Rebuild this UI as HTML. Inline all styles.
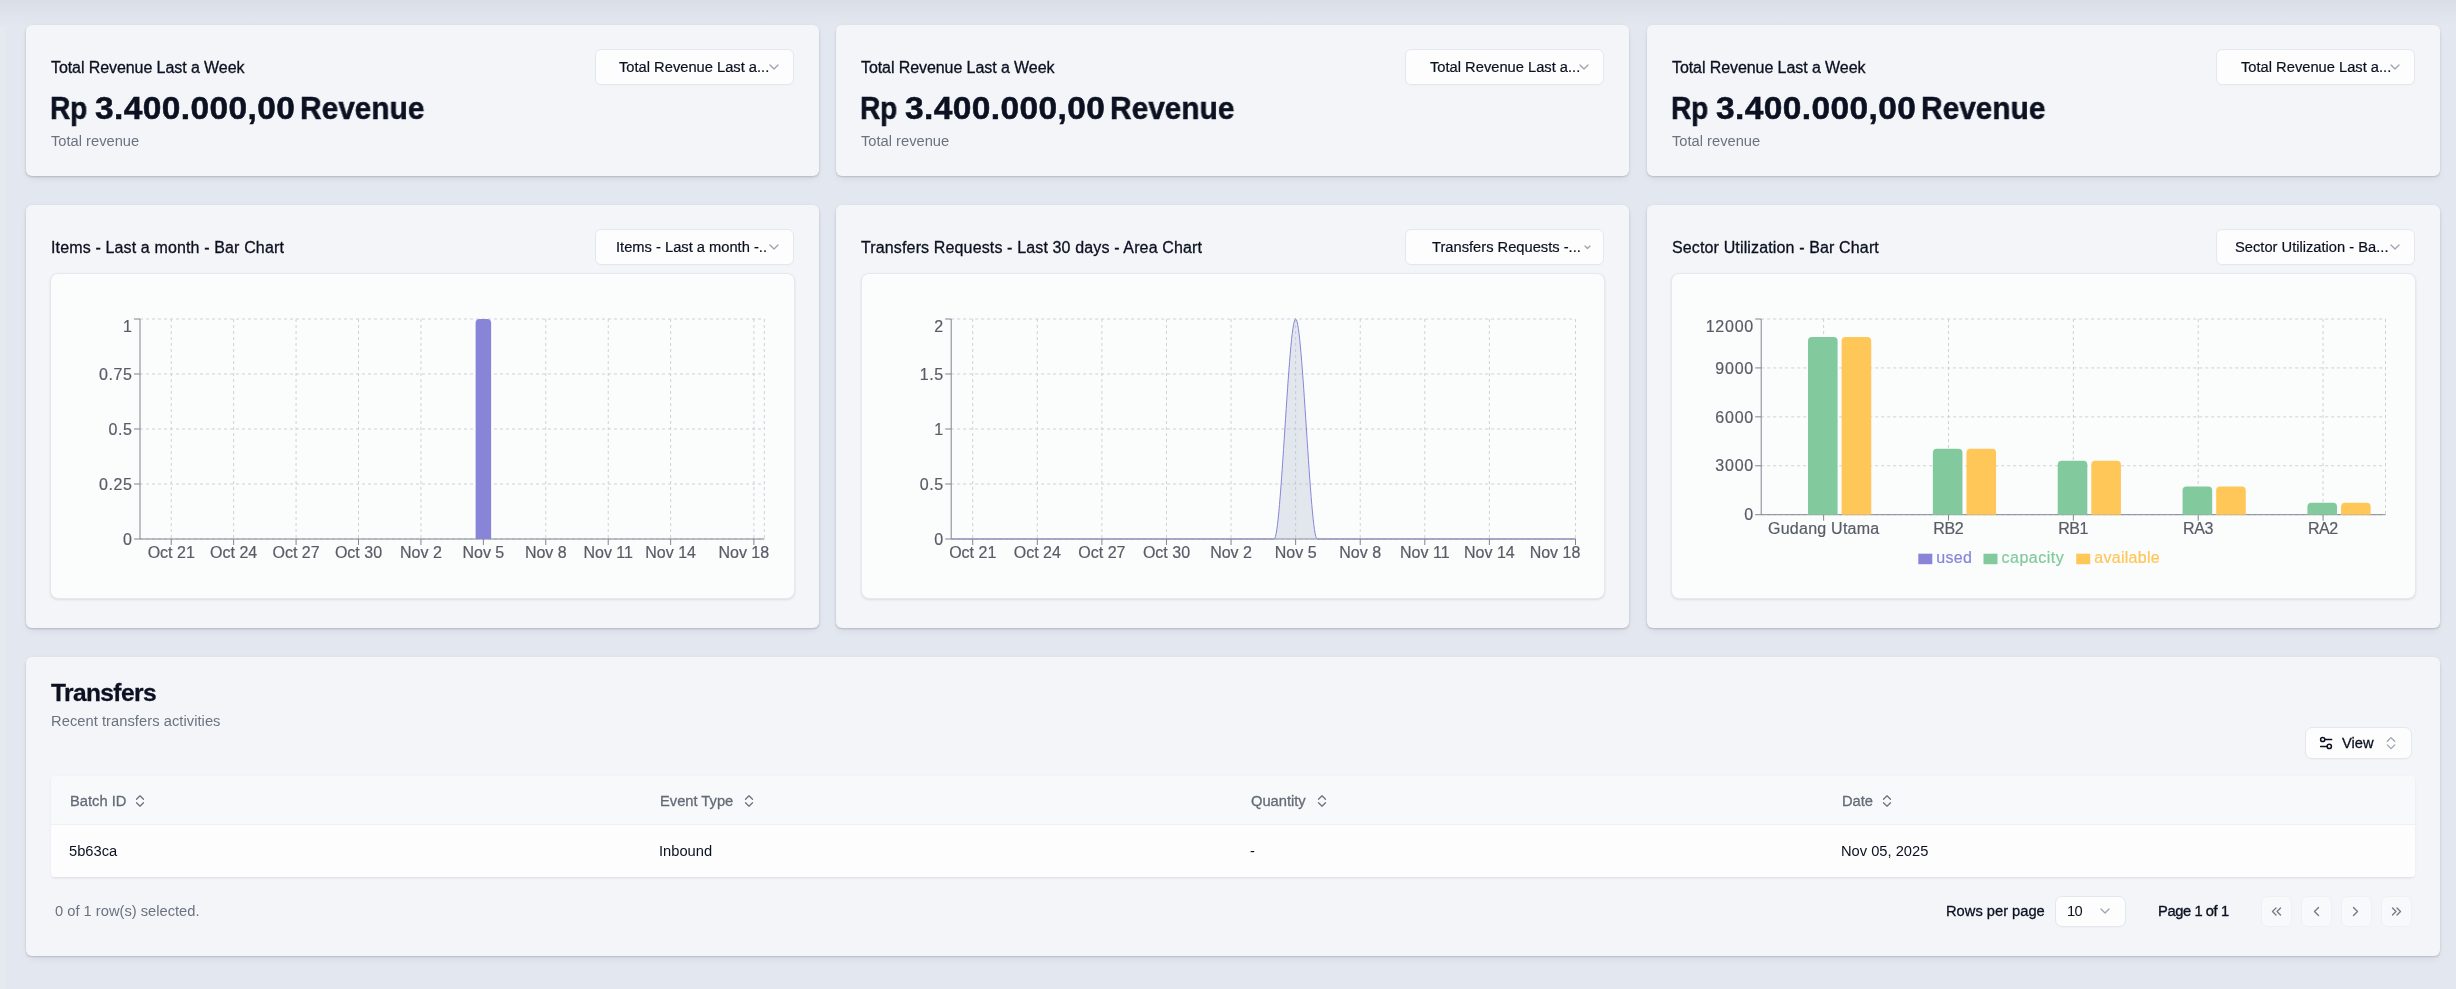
<!DOCTYPE html>
<html><head><meta charset="utf-8"><title>Dashboard</title><style>
*{margin:0;padding:0;box-sizing:border-box}
html,body{width:2456px;height:989px;overflow:hidden}
body{position:relative;background:#e3e7ef;font-family:"Liberation Sans", sans-serif}
.lstrip{position:absolute;left:0;top:0;width:5px;height:989px;background:#e6e9f0}
.topfade{position:absolute;left:0;top:0;width:2456px;height:26px;background:linear-gradient(#dadee6,#e3e7ef)}
.t{position:absolute;white-space:nowrap;line-height:1;will-change:transform}
.card{position:absolute;background:#f4f5f9;border-radius:6px;box-shadow:0 1.5px 2px -0.5px rgba(0,0,0,.15),0 4px 8px -2px rgba(0,0,0,.07),0 0 4px rgba(0,0,0,.04)}
.btn{position:absolute;background:#fdfdfe;border:1px solid #e3e8ef;border-radius:6px;box-shadow:0 1px 1px rgba(0,0,0,.02)}
.chartbox{position:absolute;background:#fbfcfc;border:1px solid #e4e8ef;border-radius:8px;box-shadow:0 1px 3px rgba(0,0,0,.08),0 1px 2px -1px rgba(0,0,0,.08)}
.charts{position:absolute;left:0;top:0;will-change:transform}
.ax{font-family:"Liberation Sans", sans-serif;font-size:16px;fill:#575c66;stroke:#575c66;stroke-width:0.2px}
.ic{position:absolute;overflow:visible}
.tbl{position:absolute;border-radius:4px;overflow:hidden;box-shadow:0 1px 3px rgba(0,0,0,.06),0 2px 2px -1px rgba(0,0,0,.05)}
.thead{position:absolute;left:0;top:0;width:100%;height:49px;background:#f8f9fb;border-bottom:1px solid #eef0f4}
.tbody{position:absolute;left:0;top:49px;width:100%;height:52px;background:#fdfdfe}
.pbtn{position:absolute;width:30.5px;height:31px;background:#f8f9fa;border:1px solid #eef0f3;border-radius:7px}
</style></head>
<body><div class="lstrip"></div><div class="topfade"></div>
<div class="card" style="left:26px;top:25px;width:793px;height:150.6px"></div><div class="t" style="left:50.8px;top:59.56px;font-size:16px;color:#0b1120;font-weight:400;letter-spacing:-0.08px;-webkit-text-stroke:0.3px currentColor;">Total Revenue Last a Week</div><div class="t" style="left:50.0px;top:92.66px;font-size:31px;color:#0b1120;font-weight:700;letter-spacing:-0.4px;transform:scaleX(0.91);transform-origin:0 0;-webkit-text-stroke:0.5px currentColor;">Rp</div><div class="t" style="left:94.5px;top:92.66px;font-size:31px;color:#0b1120;font-weight:700;letter-spacing:0.37px;transform:scaleX(1.08);transform-origin:0 0;-webkit-text-stroke:0.5px currentColor;">3.400.000,00</div><div class="t" style="left:299.9px;top:92.66px;font-size:31px;color:#0b1120;font-weight:700;letter-spacing:0px;transform:scaleX(0.963);transform-origin:0 0;-webkit-text-stroke:0.5px currentColor;">Revenue</div><div class="t" style="left:50.8px;top:133.96px;font-size:14.7px;color:#6b7280;font-weight:400;letter-spacing:0px;">Total revenue</div><div class="btn" style="left:595px;top:49px;width:199px;height:36px"></div><div class="t" style="left:619.0px;top:60.26px;font-size:14.7px;color:#0b1120;font-weight:400;letter-spacing:0px;-webkit-text-stroke:0.2px currentColor;">Total Revenue Last a...</div><svg class="ic" style="left:768.0px;top:63.2px" width="12" height="8.0"><polyline points="2,2 6.0,6.0 10,2" fill="none" stroke="#9ca3af" stroke-width="1.3" stroke-linecap="round" stroke-linejoin="round"/></svg><div class="card" style="left:836px;top:25px;width:793px;height:150.6px"></div><div class="t" style="left:860.8px;top:59.56px;font-size:16px;color:#0b1120;font-weight:400;letter-spacing:-0.08px;-webkit-text-stroke:0.3px currentColor;">Total Revenue Last a Week</div><div class="t" style="left:860.0px;top:92.66px;font-size:31px;color:#0b1120;font-weight:700;letter-spacing:-0.4px;transform:scaleX(0.91);transform-origin:0 0;-webkit-text-stroke:0.5px currentColor;">Rp</div><div class="t" style="left:904.5px;top:92.66px;font-size:31px;color:#0b1120;font-weight:700;letter-spacing:0.37px;transform:scaleX(1.08);transform-origin:0 0;-webkit-text-stroke:0.5px currentColor;">3.400.000,00</div><div class="t" style="left:1109.9px;top:92.66px;font-size:31px;color:#0b1120;font-weight:700;letter-spacing:0px;transform:scaleX(0.963);transform-origin:0 0;-webkit-text-stroke:0.5px currentColor;">Revenue</div><div class="t" style="left:860.8px;top:133.96px;font-size:14.7px;color:#6b7280;font-weight:400;letter-spacing:0px;">Total revenue</div><div class="btn" style="left:1405px;top:49px;width:199px;height:36px"></div><div class="t" style="left:1430.0px;top:60.26px;font-size:14.7px;color:#0b1120;font-weight:400;letter-spacing:0px;-webkit-text-stroke:0.2px currentColor;">Total Revenue Last a...</div><svg class="ic" style="left:1578.0px;top:63.2px" width="12" height="8.0"><polyline points="2,2 6.0,6.0 10,2" fill="none" stroke="#9ca3af" stroke-width="1.3" stroke-linecap="round" stroke-linejoin="round"/></svg><div class="card" style="left:1647px;top:25px;width:793px;height:150.6px"></div><div class="t" style="left:1671.8px;top:59.56px;font-size:16px;color:#0b1120;font-weight:400;letter-spacing:-0.08px;-webkit-text-stroke:0.3px currentColor;">Total Revenue Last a Week</div><div class="t" style="left:1671.0px;top:92.66px;font-size:31px;color:#0b1120;font-weight:700;letter-spacing:-0.4px;transform:scaleX(0.91);transform-origin:0 0;-webkit-text-stroke:0.5px currentColor;">Rp</div><div class="t" style="left:1715.5px;top:92.66px;font-size:31px;color:#0b1120;font-weight:700;letter-spacing:0.37px;transform:scaleX(1.08);transform-origin:0 0;-webkit-text-stroke:0.5px currentColor;">3.400.000,00</div><div class="t" style="left:1920.9px;top:92.66px;font-size:31px;color:#0b1120;font-weight:700;letter-spacing:0px;transform:scaleX(0.963);transform-origin:0 0;-webkit-text-stroke:0.5px currentColor;">Revenue</div><div class="t" style="left:1671.8px;top:133.96px;font-size:14.7px;color:#6b7280;font-weight:400;letter-spacing:0px;">Total revenue</div><div class="btn" style="left:2216px;top:49px;width:199px;height:36px"></div><div class="t" style="left:2240.5px;top:60.26px;font-size:14.7px;color:#0b1120;font-weight:400;letter-spacing:0px;-webkit-text-stroke:0.2px currentColor;">Total Revenue Last a...</div><svg class="ic" style="left:2389.0px;top:63.2px" width="12" height="8.0"><polyline points="2,2 6.0,6.0 10,2" fill="none" stroke="#9ca3af" stroke-width="1.3" stroke-linecap="round" stroke-linejoin="round"/></svg><div class="card" style="left:26px;top:205px;width:793px;height:422.7px"></div><div class="t" style="left:50.6px;top:240.26px;font-size:16px;color:#0b1120;font-weight:400;letter-spacing:0.14px;-webkit-text-stroke:0.3px currentColor;">Items - Last a month - Bar Chart</div><div class="btn" style="left:595px;top:229px;width:199px;height:36px"></div><div class="t" style="left:615.5px;top:240.36px;font-size:14.7px;color:#0b1120;font-weight:400;letter-spacing:0px;-webkit-text-stroke:0.2px currentColor;">Items - Last a month -..</div><svg class="ic" style="left:768.0px;top:243.2px" width="12" height="8.0"><polyline points="2,2 6.0,6.0 10,2" fill="none" stroke="#9ca3af" stroke-width="1.3" stroke-linecap="round" stroke-linejoin="round"/></svg><div class="chartbox" style="left:50px;top:273px;width:745px;height:326px"></div><div class="card" style="left:836px;top:205px;width:793px;height:422.7px"></div><div class="t" style="left:860.6px;top:240.26px;font-size:16px;color:#0b1120;font-weight:400;letter-spacing:0.14px;-webkit-text-stroke:0.3px currentColor;">Transfers Requests - Last 30 days - Area Chart</div><div class="btn" style="left:1405px;top:229px;width:199px;height:36px"></div><div class="t" style="left:1432.2px;top:240.36px;font-size:14.7px;color:#0b1120;font-weight:400;letter-spacing:0px;-webkit-text-stroke:0.2px currentColor;">Transfers Requests -...</div><svg class="ic" style="left:1583.0px;top:243.9px" width="9" height="6.5"><polyline points="2,2 4.5,4.5 7,2" fill="none" stroke="#9ca3af" stroke-width="1.3" stroke-linecap="round" stroke-linejoin="round"/></svg><div class="chartbox" style="left:861px;top:273px;width:744px;height:326px"></div><div class="card" style="left:1647px;top:205px;width:793px;height:422.7px"></div><div class="t" style="left:1671.6px;top:240.26px;font-size:16px;color:#0b1120;font-weight:400;letter-spacing:0.14px;-webkit-text-stroke:0.3px currentColor;">Sector Utilization - Bar Chart</div><div class="btn" style="left:2216px;top:229px;width:199px;height:36px"></div><div class="t" style="left:2235.0px;top:240.36px;font-size:14.7px;color:#0b1120;font-weight:400;letter-spacing:0px;-webkit-text-stroke:0.2px currentColor;">Sector Utilization - Ba...</div><svg class="ic" style="left:2389.0px;top:243.2px" width="12" height="8.0"><polyline points="2,2 6.0,6.0 10,2" fill="none" stroke="#9ca3af" stroke-width="1.3" stroke-linecap="round" stroke-linejoin="round"/></svg><div class="chartbox" style="left:1671px;top:273px;width:745px;height:326px"></div><svg class="charts" width="2456" height="989"><line x1="140.0" y1="539.0" x2="764.3" y2="539.0" stroke="#cdd1d8" stroke-dasharray="3 3"/><line x1="140.0" y1="484.0" x2="764.3" y2="484.0" stroke="#cdd1d8" stroke-dasharray="3 3"/><line x1="140.0" y1="429.0" x2="764.3" y2="429.0" stroke="#cdd1d8" stroke-dasharray="3 3"/><line x1="140.0" y1="374.0" x2="764.3" y2="374.0" stroke="#cdd1d8" stroke-dasharray="3 3"/><line x1="140.0" y1="319.0" x2="764.3" y2="319.0" stroke="#cdd1d8" stroke-dasharray="3 3"/><line x1="171.22" y1="319.0" x2="171.22" y2="539.0" stroke="#cdd1d8" stroke-dasharray="3 3"/><line x1="233.64" y1="319.0" x2="233.64" y2="539.0" stroke="#cdd1d8" stroke-dasharray="3 3"/><line x1="296.07" y1="319.0" x2="296.07" y2="539.0" stroke="#cdd1d8" stroke-dasharray="3 3"/><line x1="358.5" y1="319.0" x2="358.5" y2="539.0" stroke="#cdd1d8" stroke-dasharray="3 3"/><line x1="420.94" y1="319.0" x2="420.94" y2="539.0" stroke="#cdd1d8" stroke-dasharray="3 3"/><line x1="483.36" y1="319.0" x2="483.36" y2="539.0" stroke="#cdd1d8" stroke-dasharray="3 3"/><line x1="545.79" y1="319.0" x2="545.79" y2="539.0" stroke="#cdd1d8" stroke-dasharray="3 3"/><line x1="608.22" y1="319.0" x2="608.22" y2="539.0" stroke="#cdd1d8" stroke-dasharray="3 3"/><line x1="670.65" y1="319.0" x2="670.65" y2="539.0" stroke="#cdd1d8" stroke-dasharray="3 3"/><line x1="753.89" y1="319.0" x2="753.89" y2="539.0" stroke="#cdd1d8" stroke-dasharray="3 3"/><line x1="764.3" y1="319.0" x2="764.3" y2="539.0" stroke="#cdd1d8" stroke-dasharray="3 3"/><line x1="140.0" y1="319.0" x2="140.0" y2="539.0" stroke="#80858f"/><line x1="134.0" y1="539.0" x2="140.0" y2="539.0" stroke="#80858f"/><text x="132.6" y="539.0" dy="0.355em" text-anchor="end" class="ax" letter-spacing="0.6">0</text><line x1="134.0" y1="484.0" x2="140.0" y2="484.0" stroke="#80858f"/><text x="132.6" y="484.0" dy="0.355em" text-anchor="end" class="ax" letter-spacing="0.6">0.25</text><line x1="134.0" y1="429.0" x2="140.0" y2="429.0" stroke="#80858f"/><text x="132.6" y="429.0" dy="0.355em" text-anchor="end" class="ax" letter-spacing="0.6">0.5</text><line x1="134.0" y1="374.0" x2="140.0" y2="374.0" stroke="#80858f"/><text x="132.6" y="374.0" dy="0.355em" text-anchor="end" class="ax" letter-spacing="0.6">0.75</text><line x1="134.0" y1="319.0" x2="140.0" y2="319.0" stroke="#80858f"/><text x="132.6" y="326.0" dy="0.355em" text-anchor="end" class="ax" letter-spacing="0.6">1</text><line x1="140.0" y1="539.0" x2="764.3" y2="539.0" stroke="#80858f"/><line x1="171.22" y1="539.0" x2="171.22" y2="545.0" stroke="#80858f"/><text x="171.22" y="547.0" dy="0.71em" text-anchor="middle" class="ax" letter-spacing="0">Oct 21</text><line x1="233.64" y1="539.0" x2="233.64" y2="545.0" stroke="#80858f"/><text x="233.64" y="547.0" dy="0.71em" text-anchor="middle" class="ax" letter-spacing="0">Oct 24</text><line x1="296.07" y1="539.0" x2="296.07" y2="545.0" stroke="#80858f"/><text x="296.07" y="547.0" dy="0.71em" text-anchor="middle" class="ax" letter-spacing="0">Oct 27</text><line x1="358.5" y1="539.0" x2="358.5" y2="545.0" stroke="#80858f"/><text x="358.5" y="547.0" dy="0.71em" text-anchor="middle" class="ax" letter-spacing="0">Oct 30</text><line x1="420.94" y1="539.0" x2="420.94" y2="545.0" stroke="#80858f"/><text x="420.94" y="547.0" dy="0.71em" text-anchor="middle" class="ax" letter-spacing="0">Nov 2</text><line x1="483.36" y1="539.0" x2="483.36" y2="545.0" stroke="#80858f"/><text x="483.36" y="547.0" dy="0.71em" text-anchor="middle" class="ax" letter-spacing="0">Nov 5</text><line x1="545.79" y1="539.0" x2="545.79" y2="545.0" stroke="#80858f"/><text x="545.79" y="547.0" dy="0.71em" text-anchor="middle" class="ax" letter-spacing="0">Nov 8</text><line x1="608.22" y1="539.0" x2="608.22" y2="545.0" stroke="#80858f"/><text x="608.22" y="547.0" dy="0.71em" text-anchor="middle" class="ax" letter-spacing="0">Nov 11</text><line x1="670.65" y1="539.0" x2="670.65" y2="545.0" stroke="#80858f"/><text x="670.65" y="547.0" dy="0.71em" text-anchor="middle" class="ax" letter-spacing="0">Nov 14</text><line x1="753.89" y1="539.0" x2="753.89" y2="545.0" stroke="#80858f"/><text x="743.8" y="547.0" dy="0.71em" text-anchor="middle" class="ax" letter-spacing="0">Nov 18</text><path d="M475.61,539.0 V323.0 a4,4 0 0 1 4,-4 h7.5 a4,4 0 0 1 4,4 V539.0 Z" fill="#8884d8"/><line x1="951.2" y1="539.0" x2="1575.5" y2="539.0" stroke="#cdd1d8" stroke-dasharray="3 3"/><line x1="951.2" y1="484.0" x2="1575.5" y2="484.0" stroke="#cdd1d8" stroke-dasharray="3 3"/><line x1="951.2" y1="429.0" x2="1575.5" y2="429.0" stroke="#cdd1d8" stroke-dasharray="3 3"/><line x1="951.2" y1="374.0" x2="1575.5" y2="374.0" stroke="#cdd1d8" stroke-dasharray="3 3"/><line x1="951.2" y1="319.0" x2="1575.5" y2="319.0" stroke="#cdd1d8" stroke-dasharray="3 3"/><line x1="972.73" y1="319.0" x2="972.73" y2="539.0" stroke="#cdd1d8" stroke-dasharray="3 3"/><line x1="1037.31" y1="319.0" x2="1037.31" y2="539.0" stroke="#cdd1d8" stroke-dasharray="3 3"/><line x1="1101.89" y1="319.0" x2="1101.89" y2="539.0" stroke="#cdd1d8" stroke-dasharray="3 3"/><line x1="1166.48" y1="319.0" x2="1166.48" y2="539.0" stroke="#cdd1d8" stroke-dasharray="3 3"/><line x1="1231.06" y1="319.0" x2="1231.06" y2="539.0" stroke="#cdd1d8" stroke-dasharray="3 3"/><line x1="1295.64" y1="319.0" x2="1295.64" y2="539.0" stroke="#cdd1d8" stroke-dasharray="3 3"/><line x1="1360.22" y1="319.0" x2="1360.22" y2="539.0" stroke="#cdd1d8" stroke-dasharray="3 3"/><line x1="1424.81" y1="319.0" x2="1424.81" y2="539.0" stroke="#cdd1d8" stroke-dasharray="3 3"/><line x1="1489.39" y1="319.0" x2="1489.39" y2="539.0" stroke="#cdd1d8" stroke-dasharray="3 3"/><line x1="1575.5" y1="319.0" x2="1575.5" y2="539.0" stroke="#cdd1d8" stroke-dasharray="3 3"/><line x1="1575.5" y1="319.0" x2="1575.5" y2="539.0" stroke="#cdd1d8" stroke-dasharray="3 3"/><path d="M1274.11,539.0 C1281.29,539.0 1288.47,319.0 1295.64,319.0 C1302.82,319.0 1309.99,539.0 1317.17,539.0 Z" fill="rgb(180,188,210)" fill-opacity="0.35"/><path d="M951.2,539.0 H1274.11 C1281.29,539.0 1288.47,319.0 1295.64,319.0 C1302.82,319.0 1309.99,539.0 1317.17,539.0 H1575.5" fill="none" stroke="#8884d8"/><line x1="951.2" y1="319.0" x2="951.2" y2="539.0" stroke="#80858f"/><line x1="945.2" y1="539.0" x2="951.2" y2="539.0" stroke="#80858f"/><text x="943.8000000000001" y="539.0" dy="0.355em" text-anchor="end" class="ax" letter-spacing="0.6">0</text><line x1="945.2" y1="484.0" x2="951.2" y2="484.0" stroke="#80858f"/><text x="943.8000000000001" y="484.0" dy="0.355em" text-anchor="end" class="ax" letter-spacing="0.6">0.5</text><line x1="945.2" y1="429.0" x2="951.2" y2="429.0" stroke="#80858f"/><text x="943.8000000000001" y="429.0" dy="0.355em" text-anchor="end" class="ax" letter-spacing="0.6">1</text><line x1="945.2" y1="374.0" x2="951.2" y2="374.0" stroke="#80858f"/><text x="943.8000000000001" y="374.0" dy="0.355em" text-anchor="end" class="ax" letter-spacing="0.6">1.5</text><line x1="945.2" y1="319.0" x2="951.2" y2="319.0" stroke="#80858f"/><text x="943.8000000000001" y="326.0" dy="0.355em" text-anchor="end" class="ax" letter-spacing="0.6">2</text><line x1="951.2" y1="539.0" x2="1575.5" y2="539.0" stroke="#8f91a3"/><line x1="972.73" y1="539.0" x2="972.73" y2="545.0" stroke="#80858f"/><text x="972.73" y="547.0" dy="0.71em" text-anchor="middle" class="ax" letter-spacing="0">Oct 21</text><line x1="1037.31" y1="539.0" x2="1037.31" y2="545.0" stroke="#80858f"/><text x="1037.31" y="547.0" dy="0.71em" text-anchor="middle" class="ax" letter-spacing="0">Oct 24</text><line x1="1101.89" y1="539.0" x2="1101.89" y2="545.0" stroke="#80858f"/><text x="1101.89" y="547.0" dy="0.71em" text-anchor="middle" class="ax" letter-spacing="0">Oct 27</text><line x1="1166.48" y1="539.0" x2="1166.48" y2="545.0" stroke="#80858f"/><text x="1166.48" y="547.0" dy="0.71em" text-anchor="middle" class="ax" letter-spacing="0">Oct 30</text><line x1="1231.06" y1="539.0" x2="1231.06" y2="545.0" stroke="#80858f"/><text x="1231.06" y="547.0" dy="0.71em" text-anchor="middle" class="ax" letter-spacing="0">Nov 2</text><line x1="1295.64" y1="539.0" x2="1295.64" y2="545.0" stroke="#80858f"/><text x="1295.64" y="547.0" dy="0.71em" text-anchor="middle" class="ax" letter-spacing="0">Nov 5</text><line x1="1360.22" y1="539.0" x2="1360.22" y2="545.0" stroke="#80858f"/><text x="1360.22" y="547.0" dy="0.71em" text-anchor="middle" class="ax" letter-spacing="0">Nov 8</text><line x1="1424.81" y1="539.0" x2="1424.81" y2="545.0" stroke="#80858f"/><text x="1424.81" y="547.0" dy="0.71em" text-anchor="middle" class="ax" letter-spacing="0">Nov 11</text><line x1="1489.39" y1="539.0" x2="1489.39" y2="545.0" stroke="#80858f"/><text x="1489.39" y="547.0" dy="0.71em" text-anchor="middle" class="ax" letter-spacing="0">Nov 14</text><line x1="1575.5" y1="539.0" x2="1575.5" y2="545.0" stroke="#80858f"/><text x="1555.0" y="547.0" dy="0.71em" text-anchor="middle" class="ax" letter-spacing="0">Nov 18</text><line x1="1761.2" y1="514.7" x2="2385.5" y2="514.7" stroke="#cdd1d8" stroke-dasharray="3 3"/><line x1="1761.2" y1="465.77500000000003" x2="2385.5" y2="465.77500000000003" stroke="#cdd1d8" stroke-dasharray="3 3"/><line x1="1761.2" y1="416.85" x2="2385.5" y2="416.85" stroke="#cdd1d8" stroke-dasharray="3 3"/><line x1="1761.2" y1="367.925" x2="2385.5" y2="367.925" stroke="#cdd1d8" stroke-dasharray="3 3"/><line x1="1761.2" y1="319.0" x2="2385.5" y2="319.0" stroke="#cdd1d8" stroke-dasharray="3 3"/><line x1="1823.63" y1="319.0" x2="1823.63" y2="514.7" stroke="#cdd1d8" stroke-dasharray="3 3"/><line x1="1948.49" y1="319.0" x2="1948.49" y2="514.7" stroke="#cdd1d8" stroke-dasharray="3 3"/><line x1="2073.35" y1="319.0" x2="2073.35" y2="514.7" stroke="#cdd1d8" stroke-dasharray="3 3"/><line x1="2198.21" y1="319.0" x2="2198.21" y2="514.7" stroke="#cdd1d8" stroke-dasharray="3 3"/><line x1="2323.0699999999997" y1="319.0" x2="2323.0699999999997" y2="514.7" stroke="#cdd1d8" stroke-dasharray="3 3"/><line x1="2385.5" y1="319.0" x2="2385.5" y2="514.7" stroke="#cdd1d8" stroke-dasharray="3 3"/><line x1="1761.2" y1="319.0" x2="1761.2" y2="514.7" stroke="#80858f"/><line x1="1755.2" y1="514.7" x2="1761.2" y2="514.7" stroke="#80858f"/><text x="1753.95" y="514.7" dy="0.355em" text-anchor="end" class="ax" letter-spacing="0.75">0</text><line x1="1755.2" y1="465.77500000000003" x2="1761.2" y2="465.77500000000003" stroke="#80858f"/><text x="1753.95" y="465.77500000000003" dy="0.355em" text-anchor="end" class="ax" letter-spacing="0.75">3000</text><line x1="1755.2" y1="416.85" x2="1761.2" y2="416.85" stroke="#80858f"/><text x="1753.95" y="416.85" dy="0.355em" text-anchor="end" class="ax" letter-spacing="0.75">6000</text><line x1="1755.2" y1="367.925" x2="1761.2" y2="367.925" stroke="#80858f"/><text x="1753.95" y="367.925" dy="0.355em" text-anchor="end" class="ax" letter-spacing="0.75">9000</text><line x1="1755.2" y1="319.0" x2="1761.2" y2="319.0" stroke="#80858f"/><text x="1753.95" y="326.0" dy="0.355em" text-anchor="end" class="ax" letter-spacing="0.75">12000</text><line x1="1761.2" y1="514.7" x2="2385.5" y2="514.7" stroke="#80858f"/><line x1="1823.63" y1="514.7" x2="1823.63" y2="520.7" stroke="#80858f"/><text x="1823.755" y="522.7" dy="0.71em" text-anchor="middle" class="ax" letter-spacing="0.25">Gudang Utama</text><line x1="1948.49" y1="514.7" x2="1948.49" y2="520.7" stroke="#80858f"/><text x="1948.29" y="522.7" dy="0.71em" text-anchor="middle" class="ax" letter-spacing="-0.4">RB2</text><line x1="2073.35" y1="514.7" x2="2073.35" y2="520.7" stroke="#80858f"/><text x="2073.15" y="522.7" dy="0.71em" text-anchor="middle" class="ax" letter-spacing="-0.4">RB1</text><line x1="2198.21" y1="514.7" x2="2198.21" y2="520.7" stroke="#80858f"/><text x="2198.01" y="522.7" dy="0.71em" text-anchor="middle" class="ax" letter-spacing="-0.4">RA3</text><line x1="2323.0699999999997" y1="514.7" x2="2323.0699999999997" y2="520.7" stroke="#80858f"/><text x="2322.87" y="522.7" dy="0.71em" text-anchor="middle" class="ax" letter-spacing="-0.4">RA2</text><path d="M1808.00,514.7 V340.94 a4,4 0 0 1 4,-4 h21.60 a4,4 0 0 1 4,4 V514.7 Z" fill="#82ca9d"/><path d="M1841.60,514.7 V340.94 a4,4 0 0 1 4,-4 h21.60 a4,4 0 0 1 4,4 V514.7 Z" fill="#ffc658"/><path d="M1932.86,514.7 V452.65 a4,4 0 0 1 4,-4 h21.60 a4,4 0 0 1 4,4 V514.7 Z" fill="#82ca9d"/><path d="M1966.46,514.7 V452.65 a4,4 0 0 1 4,-4 h21.60 a4,4 0 0 1 4,4 V514.7 Z" fill="#ffc658"/><path d="M2057.72,514.7 V464.72 a4,4 0 0 1 4,-4 h21.60 a4,4 0 0 1 4,4 V514.7 Z" fill="#82ca9d"/><path d="M2091.32,514.7 V464.72 a4,4 0 0 1 4,-4 h21.60 a4,4 0 0 1 4,4 V514.7 Z" fill="#ffc658"/><path d="M2182.58,514.7 V490.49 a4,4 0 0 1 4,-4 h21.60 a4,4 0 0 1 4,4 V514.7 Z" fill="#82ca9d"/><path d="M2216.18,514.7 V490.49 a4,4 0 0 1 4,-4 h21.60 a4,4 0 0 1 4,4 V514.7 Z" fill="#ffc658"/><path d="M2307.44,514.7 V506.63 a4,4 0 0 1 4,-4 h21.60 a4,4 0 0 1 4,4 V514.7 Z" fill="#82ca9d"/><path d="M2341.04,514.7 V506.63 a4,4 0 0 1 4,-4 h21.60 a4,4 0 0 1 4,4 V514.7 Z" fill="#ffc658"/><rect x="1918.3" y="553.7" width="14" height="10.5" fill="#8884d8"/><text x="1936.3" y="557" dy="0.355em" class="ax" letter-spacing="0.3" style="fill:#8884d8;stroke:#8884d8">used</text><rect x="1983.5" y="553.7" width="14" height="10.5" fill="#82ca9d"/><text x="2001.5" y="557" dy="0.355em" class="ax" letter-spacing="0.5" style="fill:#82ca9d;stroke:#82ca9d">capacity</text><rect x="2076.2" y="553.7" width="14" height="10.5" fill="#ffc658"/><text x="2094.2" y="557" dy="0.355em" class="ax" letter-spacing="0.3" style="fill:#ffc658;stroke:#ffc658">available</text></svg><div class="card" style="left:26px;top:656.8px;width:2414px;height:298.9px"></div><div class="t" style="left:51.0px;top:680.76px;font-size:24.5px;color:#0b1120;font-weight:700;letter-spacing:-0.6px;-webkit-text-stroke:0.3px currentColor;">Transfers</div><div class="t" style="left:50.8px;top:714.36px;font-size:14.7px;color:#6b7280;font-weight:400;letter-spacing:0.05px;">Recent transfers activities</div><div class="btn" style="left:2305px;top:727px;width:107px;height:32px;border-radius:7px"></div><svg class="ic" style="left:2316px;top:734px" width="20" height="18"><g fill="none" stroke="#0b1120" stroke-width="1.5" stroke-linecap="round"><circle cx="6.7" cy="5.5" r="2.1"/><line x1="8.8" y1="5.5" x2="15.6" y2="5.5"/><circle cx="13.3" cy="12.4" r="2.1"/><line x1="4.6" y1="12.4" x2="11.2" y2="12.4"/></g></svg><div class="t" style="left:2342.3px;top:736.16px;font-size:14.7px;color:#0b1120;font-weight:400;letter-spacing:0px;-webkit-text-stroke:0.3px currentColor;">View</div><svg class="ic" style="left:2385px;top:735px" width="12" height="16"><g fill="none" stroke="#9ca3af" stroke-width="1.3" stroke-linecap="round" stroke-linejoin="round"><polyline points="2.3,6.3 6,2.6 9.7,6.3"/><polyline points="2.3,9.9 6,13.6 9.7,9.9"/></g></svg><div class="tbl" style="left:51px;top:776px;width:2364px;height:101px"><div class="thead"></div><div class="tbody"></div></div><div class="t" style="left:70.0px;top:794.06px;font-size:14.7px;color:#646b77;font-weight:400;letter-spacing:0px;-webkit-text-stroke:0.3px currentColor;">Batch ID</div><svg class="ic" style="left:133.5px;top:793px" width="12" height="16"><g fill="none" stroke="#6b7280" stroke-width="1.25" stroke-linecap="round" stroke-linejoin="round"><polyline points="2.5,6.3 6,2.8 9.5,6.3"/><polyline points="2.5,9.7 6,13.2 9.5,9.7"/></g></svg><div class="t" style="left:659.9px;top:794.06px;font-size:14.7px;color:#646b77;font-weight:400;letter-spacing:0px;-webkit-text-stroke:0.3px currentColor;">Event Type</div><svg class="ic" style="left:743px;top:793px" width="12" height="16"><g fill="none" stroke="#6b7280" stroke-width="1.25" stroke-linecap="round" stroke-linejoin="round"><polyline points="2.5,6.3 6,2.8 9.5,6.3"/><polyline points="2.5,9.7 6,13.2 9.5,9.7"/></g></svg><div class="t" style="left:1250.7px;top:794.06px;font-size:14.7px;color:#646b77;font-weight:400;letter-spacing:0px;-webkit-text-stroke:0.3px currentColor;">Quantity</div><svg class="ic" style="left:1316px;top:793px" width="12" height="16"><g fill="none" stroke="#6b7280" stroke-width="1.25" stroke-linecap="round" stroke-linejoin="round"><polyline points="2.5,6.3 6,2.8 9.5,6.3"/><polyline points="2.5,9.7 6,13.2 9.5,9.7"/></g></svg><div class="t" style="left:1841.6px;top:794.06px;font-size:14.7px;color:#646b77;font-weight:400;letter-spacing:0px;-webkit-text-stroke:0.3px currentColor;">Date</div><svg class="ic" style="left:1881px;top:793px" width="12" height="16"><g fill="none" stroke="#6b7280" stroke-width="1.25" stroke-linecap="round" stroke-linejoin="round"><polyline points="2.5,6.3 6,2.8 9.5,6.3"/><polyline points="2.5,9.7 6,13.2 9.5,9.7"/></g></svg><div class="t" style="left:68.5px;top:844.16px;font-size:14.7px;color:#0b1120;font-weight:400;letter-spacing:0px;">5b63ca</div><div class="t" style="left:658.8px;top:844.16px;font-size:14.7px;color:#0b1120;font-weight:400;letter-spacing:0px;">Inbound</div><div class="t" style="left:1249.9px;top:844.16px;font-size:14.7px;color:#0b1120;font-weight:400;letter-spacing:0px;">-</div><div class="t" style="left:1840.5px;top:844.16px;font-size:14.7px;color:#0b1120;font-weight:400;letter-spacing:0px;">Nov 05, 2025</div><div class="t" style="left:54.7px;top:903.56px;font-size:14.7px;color:#6b7280;font-weight:400;letter-spacing:0px;">0 of 1 row(s) selected.</div><div class="t" style="left:1946.4px;top:903.96px;font-size:14.7px;color:#0b1120;font-weight:400;letter-spacing:0px;-webkit-text-stroke:0.3px currentColor;">Rows per page</div><div class="btn" style="left:2055px;top:895.5px;width:71px;height:31px;border-radius:7px"></div><div class="t" style="left:2066.5px;top:904.16px;font-size:14.7px;color:#0b1120;font-weight:400;letter-spacing:-0.6px;">10</div><svg class="ic" style="left:2099.0px;top:907.0px" width="12" height="8.0"><polyline points="2,2 6.0,6.0 10,2" fill="none" stroke="#9ca3af" stroke-width="1.3" stroke-linecap="round" stroke-linejoin="round"/></svg><div class="t" style="left:2158.1px;top:903.96px;font-size:14.7px;color:#0b1120;font-weight:400;letter-spacing:-0.4px;-webkit-text-stroke:0.35px currentColor;">Page 1 of 1</div><div class="pbtn" style="left:2261px;top:895.5px"></div><div class="pbtn" style="left:2301px;top:895.5px"></div><div class="pbtn" style="left:2341px;top:895.5px"></div><div class="pbtn" style="left:2381px;top:895.5px"></div><svg class="ic" style="left:2268.5px;top:904.5px" width="15" height="13"><g fill="none" stroke="#737987" stroke-width="1.35" stroke-linecap="round" stroke-linejoin="round"><polyline points="7,3 3.5,6.5 7,10"/><polyline points="11.5,3 8,6.5 11.5,10"/></g></svg><svg class="ic" style="left:2309.5px;top:904.5px" width="15" height="13"><g fill="none" stroke="#737987" stroke-width="1.35" stroke-linecap="round" stroke-linejoin="round"><polyline points="8.5,2.5 4.5,6.5 8.5,10.5"/></g></svg><svg class="ic" style="left:2349.0px;top:904.5px" width="15" height="13"><g fill="none" stroke="#737987" stroke-width="1.35" stroke-linecap="round" stroke-linejoin="round"><polyline points="4.5,2.5 8.5,6.5 4.5,10.5"/></g></svg><svg class="ic" style="left:2388.5px;top:904.5px" width="15" height="13"><g fill="none" stroke="#737987" stroke-width="1.35" stroke-linecap="round" stroke-linejoin="round"><polyline points="3.5,3 7,6.5 3.5,10"/><polyline points="8,3 11.5,6.5 8,10"/></g></svg>
</body></html>
